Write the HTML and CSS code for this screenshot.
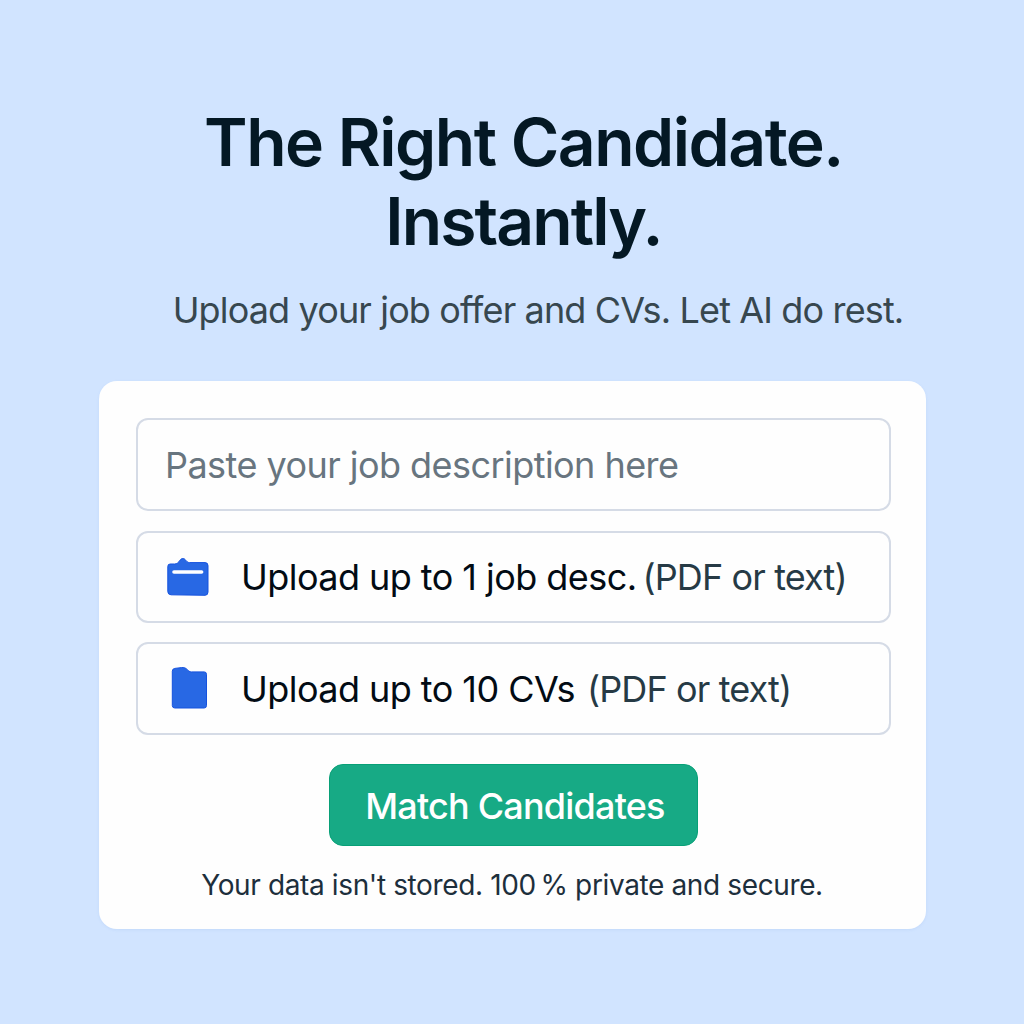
FILE: index.html
```html
<!DOCTYPE html>
<html lang="en">
<head>
  <meta charset="UTF-8" />
  <title>The Right Candidate. Instantly.</title>
  <meta name="viewport" content="width=device-width, initial-scale=1.0" />
  <link rel="stylesheet" href="styles.css">
</head>
<body>

  <header class="hero">
    <h1>The Right Candidate.<br><span class="second-line">Instantly.</span></h1>
    <p class="subtitle">Upload your job offer and CVs. Let AI do rest.</p>
  </header>

  <main class="card">
    <input type="text" class="field" placeholder="Paste your job description here" aria-label="Job description">

    <button type="button" class="field upload">
      <svg class="icon" viewBox="0 0 48 48" aria-hidden="true">
        <path class="shape" d="M6.2 11H10.5C13 11 14.5 9.5 16 7.2C17.5 5 19.8 5 21.3 6.7C22.7 8.3 23.5 9.6 25.5 9.6H41Q44 9.6 44 12.6V39Q44 42.3 41 42.3L7 41.8Q3.8 41.6 3.8 38.6V13.4Q3.8 11 6.2 11Z"/>
        <rect class="slot" x="8.2" y="17.2" width="31.2" height="3.6" rx="1.8"/>
      </svg>
      <span class="name">Upload up to 1 job desc.</span>
      <span class="hint">(PDF or text)</span>
    </button>

    <button type="button" class="field upload cvs">
      <svg class="icon" viewBox="0 0 48 48" aria-hidden="true">
        <path class="shape" d="M10.8 3.4L17.5 2.6C20 2.4 21.5 2.8 23 4.4C24.4 5.8 25.5 6.9 27.5 6.9H40.2Q42.5 6.9 42.5 9.3V40.6Q42.5 43 40.2 43H10.8Q8.3 43 8.3 40.6V6.2Q8.3 3.7 10.8 3.4Z"/>
      </svg>
      <span class="name">Upload up to 10 CVs</span>
      <span class="hint">(PDF or text)</span>
    </button>

    <button type="button" class="match">Match Candidates</button>

    <p class="privacy">Your data isn't stored. 100&thinsp;% private and secure.</p>
  </main>

</body>
</html>
```
FILE: styles.css
```css
:root {
  --bg: #d1e4ff;
  --heading: #041824;
  --subtitle: #37474f;
  --border: #d5dbe6;
  --blue: #2868e4;
  --green: #17aa85;
}

* {
  box-sizing: border-box;
}

body {
  margin: 0;
  min-height: 100vh;
  padding-top: 103px;
  background-color: var(--bg);
  font-family: Inter, "Liberation Sans", sans-serif;
  display: flex;
  flex-direction: column;
  align-items: center;
}

.hero {
  width: 100%;
  text-align: center;
}

h1 {
  margin: 0;
  padding-left: 23px;
  font-size: 66px;
  font-weight: 600;
  line-height: 79px;
  letter-spacing: -1.5px;
  color: var(--heading);
}

.second-line {
  letter-spacing: -1.9px;
}

.subtitle {
  margin: 27px 0 49px;
  padding-left: 52px;
  font-size: 36px;
  line-height: 44px;
  letter-spacing: -0.86px;
  color: var(--subtitle);
}

.card {
  width: 827px;
  height: 548px;
  margin-left: 1px;
  padding: 37px 35px 0 37px;
  display: flex;
  flex-direction: column;
  align-items: center;
  background-color: #fefefe;
  border-radius: 18px;
  box-shadow: 0 1px 3px rgba(100, 150, 220, 0.12);
}

.field {
  width: 100%;
  height: 93px;
  padding: 0 27px;
  border: 2px solid var(--border);
  border-radius: 12px;
  background-color: #fefefe;
  font-family: inherit;
  font-size: 36px;
  letter-spacing: -0.55px;
}

.field::placeholder {
  color: #68757f;
  opacity: 1;
}

.upload {
  height: 92px;
  margin-top: 20px;
  padding: 0 26px;
  display: flex;
  align-items: center;
  letter-spacing: -0.55px;
  text-align: left;
  white-space: nowrap;
  cursor: pointer;
}

.upload.cvs {
  height: 93px;
  margin-top: 19px;
}

.icon {
  width: 48px;
  height: 48px;
  margin-right: 29px;
  flex-shrink: 0;
}

.shape {
  fill: var(--blue);
  stroke: #1552df;
  stroke-width: 1;
}

.slot {
  fill: #ffffff;
}

.name {
  color: #020b14;
}

.hint {
  margin-left: 6px;
  letter-spacing: -0.88px;
  color: #263a45;
}

.cvs .hint {
  margin-left: 12px;
}

.match {
  width: 369px;
  height: 82px;
  margin: 29px 0 0;
  padding: 1px 0 0 3px;
  border: 1px solid #08a077;
  border-radius: 14px;
  background-color: var(--green);
  color: #ffffff;
  font-family: inherit;
  font-size: 36px;
  font-weight: 500;
  letter-spacing: -0.8px;
  cursor: pointer;
}

.privacy {
  margin: 22px 0 0;
  padding-right: 3px;
  font-size: 28px;
  line-height: 34px;
  letter-spacing: -0.37px;
  color: #1d2f3c;
}
```
